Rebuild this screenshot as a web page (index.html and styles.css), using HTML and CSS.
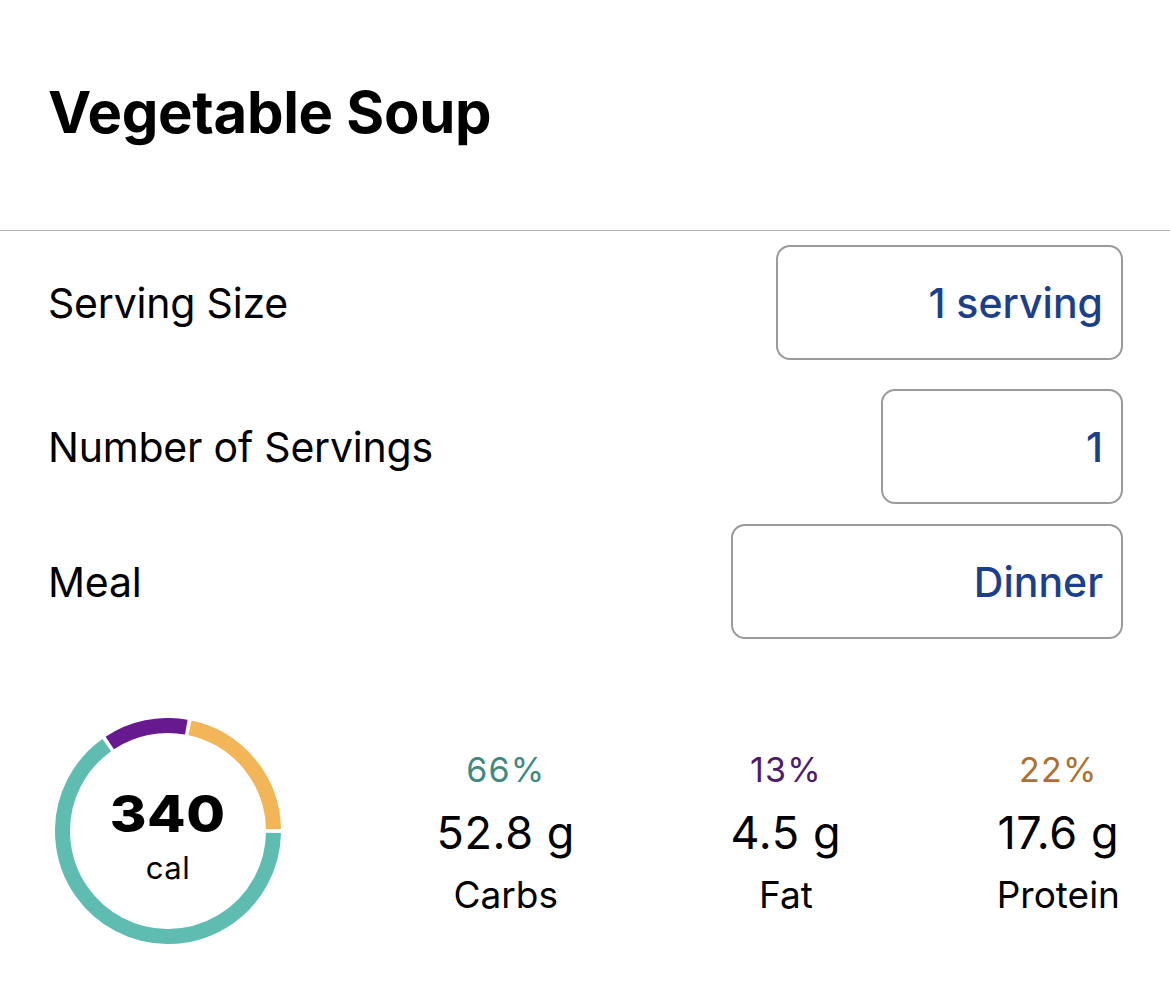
FILE: index.html
```html
<!DOCTYPE html>
<html lang="en">
<head>
<meta charset="utf-8">
<title>Vegetable Soup</title>
<link rel="stylesheet" href="styles.css">
</head>
<body>
<header class="header">
  <h1 class="title">Vegetable Soup</h1>
</header>
<main class="form">
  <div class="row row-serving">
    <span class="label">Serving Size</span>
    <div class="field field-serving"><span class="value">1 serving</span></div>
  </div>
  <div class="row row-count">
    <span class="label">Number of Servings</span>
    <div class="field field-count"><span class="value">1</span></div>
  </div>
  <div class="row row-meal">
    <span class="label">Meal</span>
    <div class="field field-meal"><span class="value">Dinner</span></div>
  </div>
</main>
<section class="macros">
  <div class="donut">
    <svg class="donut-svg" width="226" height="226" viewBox="0 0 226 226">
      <path class="arc arc-protein" d="M134.93 9.81 A105.5 105.5 0 0 1 218.48 111.16"/>
      <path class="arc arc-carbs" d="M218.48 114.84 A105.5 105.5 0 1 1 51.74 27.11"/>
      <path class="arc arc-fat" d="M54.77 25.02 A105.5 105.5 0 0 1 131.32 9.10"/>
    </svg>
    <div class="donut-label">
      <span class="cal-num">340</span>
      <span class="cal-unit">cal</span>
    </div>
  </div>
  <div class="macro">
    <span class="pct pct-carbs">66%</span>
    <span class="grams">52.8 g</span>
    <span class="name">Carbs</span>
  </div>
  <div class="macro">
    <span class="pct pct-fat">13%</span>
    <span class="grams">4.5 g</span>
    <span class="name">Fat</span>
  </div>
  <div class="macro">
    <span class="pct pct-protein">22%</span>
    <span class="grams">17.6 g</span>
    <span class="name">Protein</span>
  </div>
</section>
</body>
</html>
```
FILE: styles.css
```css
* { box-sizing: border-box; }
html, body { margin: 0; padding: 0; background: #ffffff; }
body {
  font-family: Inter, "Noto Sans", "Liberation Sans", sans-serif;
  color: #000;
  width: 1170px;
}
.header {
  padding: 83px 0 0 48px;
  height: 231px;
  border-bottom: 1px solid #b3b3b3;
}
.title {
  margin: 0;
  font-size: 58px;
  line-height: 58px;
  font-weight: 700;
  letter-spacing: -0.3px;
}
.form { display: flex; flex-direction: column; }
.row {
  display: flex;
  justify-content: space-between;
  align-items: center;
  padding: 0 47px 0 48px;
}
.row-serving { margin-top: 14px; }
.row-count { margin-top: 29px; }
.row-meal { margin-top: 20px; }
.label {
  font-size: 41px;
  letter-spacing: -0.2px;
}
.field {
  height: 115px;
  border: 2.5px solid #9a9a9a;
  border-radius: 14px;
  display: flex;
  align-items: center;
  justify-content: flex-end;
  padding-right: 18px;
}
.field-serving { width: 347px; }
.field-count { width: 242px; }
.field-meal { width: 392px; }
.value {
  font-size: 41px;
  color: #1c3f8b;
  font-weight: 500;
  letter-spacing: 0;
}
.macros {
  margin-top: 79px;
  display: flex;
  justify-content: space-between;
  align-items: center;
  padding: 0 50px 0 55px;
}
.donut {
  display: grid;
  width: 226px;
  height: 226px;
}
.donut-svg, .donut-label { grid-area: 1 / 1; }
.arc { fill: none; stroke-width: 15; }
.arc-protein { stroke: #f2b558; }
.arc-carbs { stroke: #5fbcb1; }
.arc-fat { stroke: #671a8f; }
.donut-label {
  display: flex;
  flex-direction: column;
  align-items: center;
  justify-content: center;
  padding-top: 9px;
}
.cal-num {
  font-size: 51px;
  line-height: 50px;
  font-weight: 800;
  letter-spacing: 0.5px;
  transform: scaleX(1.1);
}
.cal-unit {
  font-size: 31px;
  line-height: 30px;
  margin-top: 14px;
  letter-spacing: 0.5px;
}
.macro {
  display: flex;
  flex-direction: column;
  align-items: center;
  padding-top: 4px;
}
.pct { font-size: 34px; line-height: 40px; letter-spacing: 1.2px; }
.pct-carbs { color: #3e8a80; }
.pct-fat { color: #4f1a6e; }
.pct-protein { color: #b06f2c; }
.grams {
  font-size: 45px;
  line-height: 56px;
  margin-top: 15px;
  letter-spacing: 0.6px;
}
.name {
  font-size: 37px;
  line-height: 44px;
  margin-top: 12px;
}
```
